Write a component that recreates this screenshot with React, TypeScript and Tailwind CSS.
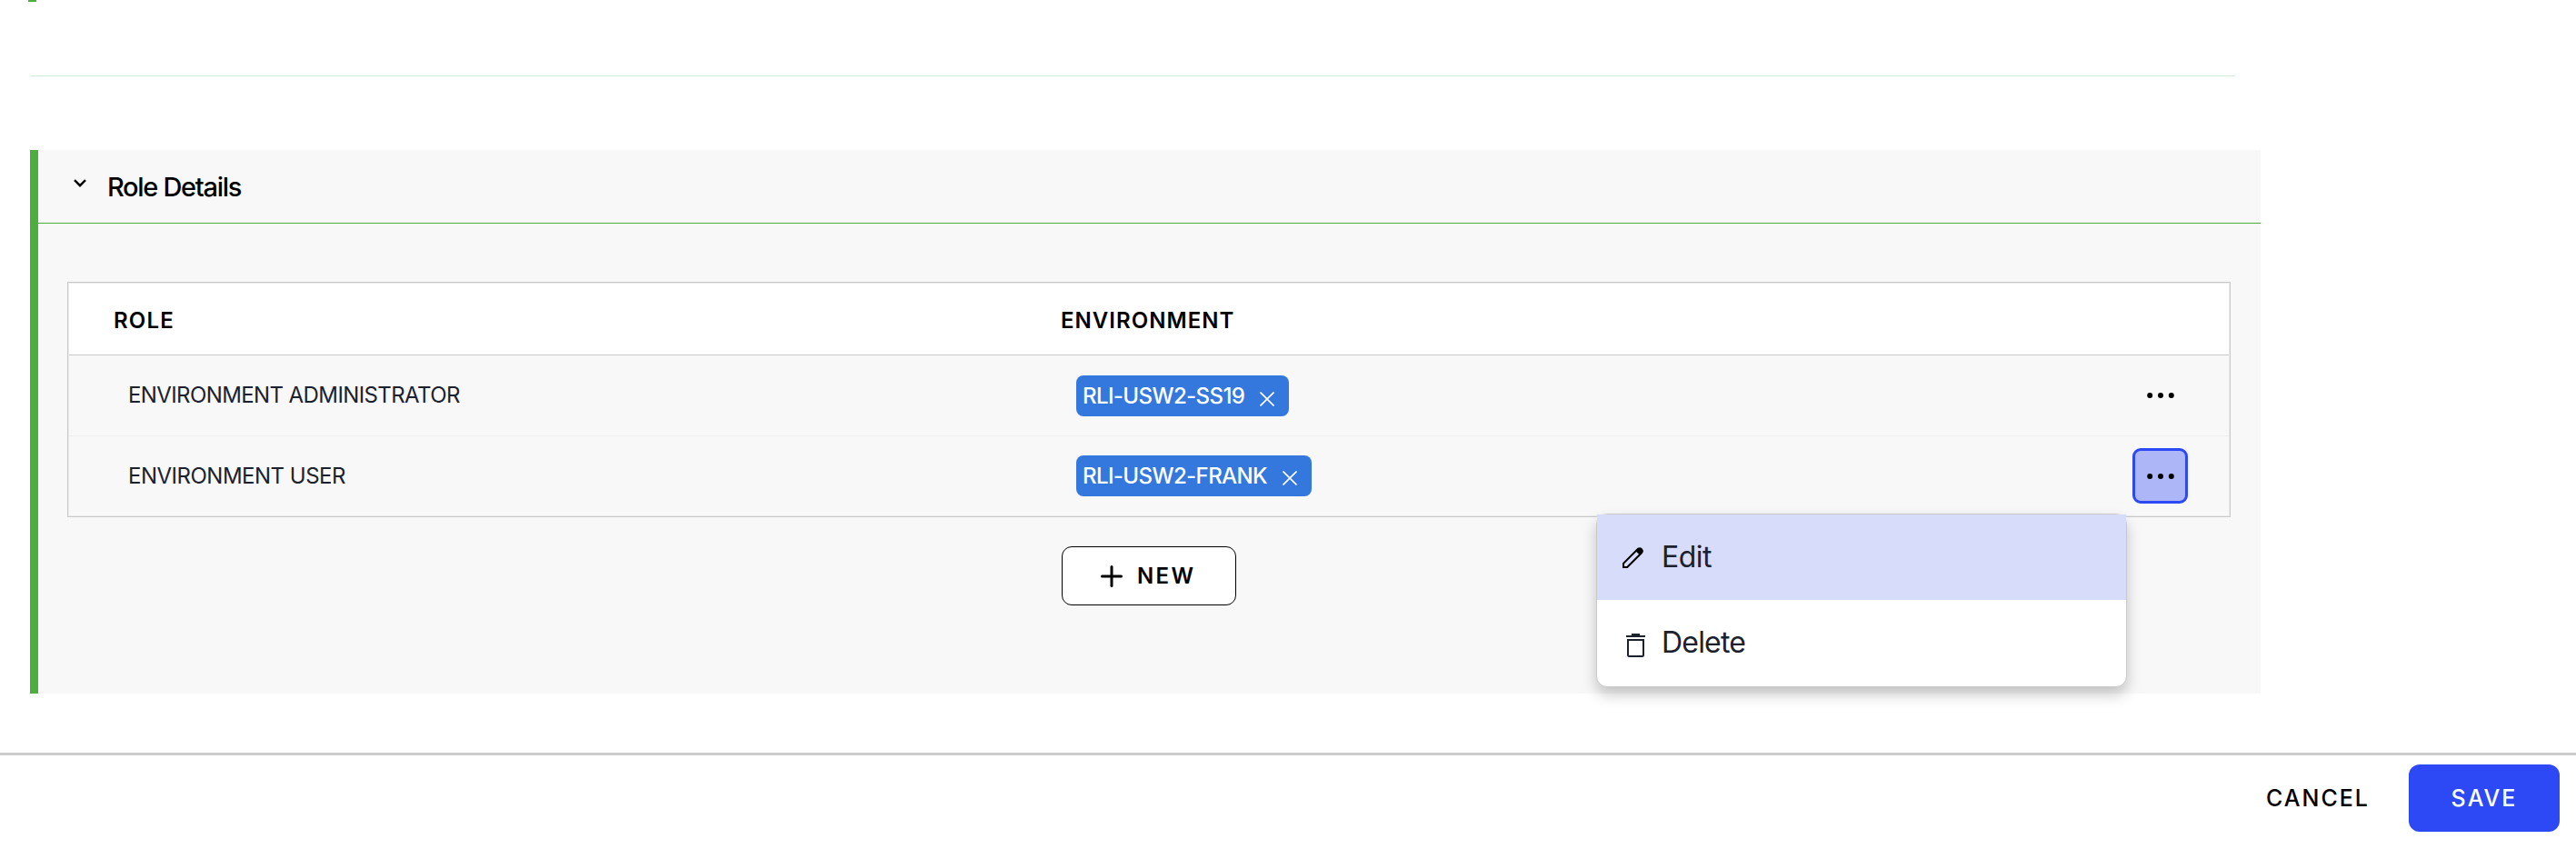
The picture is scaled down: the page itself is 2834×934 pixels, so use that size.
const CLOSE = (
  <svg className="size-4" viewBox="0 0 16 16" fill="none" stroke="currentColor" strokeWidth="1.6">
    <path d="M0.5 0.5L15.5 15.5M15.5 0.5L0.5 15.5" />
  </svg>
);

function Tag({ label, className, nudge }: { label: string; className: string; nudge: string }) {
  return (
    <div className={`flex h-[45px] items-center justify-between rounded-[8px] bg-[#3478dd] pl-[7px] pr-[16px] text-white ${className}`}>
      <span className="whitespace-nowrap pt-px text-[24px] font-medium leading-[44px] tracking-[-0.6px]">{label}</span>
      <span className={nudge}>{CLOSE}</span>
    </div>
  );
}

function Dots({ active }: { active?: boolean }) {
  return (
    <button
      className={`flex h-[61px] w-[61px] items-center justify-center rounded-[9px] border-[3px] ${
        active ? "border-[#2c49f5] bg-[#adb7f8]" : "border-transparent"
      }`}
    >
      <svg className="h-[6px] w-[30px]" viewBox="0 0 30 6" fill="#000">
        <circle cx="3.2" cy="3" r="3" />
        <circle cx="15" cy="3" r="3" />
        <circle cx="26.8" cy="3" r="3" />
      </svg>
    </button>
  );
}

export default function App() {
  return (
    <div className="flex h-[934px] w-[2834px] flex-col overflow-hidden bg-white font-['Inter','Liberation_Sans',sans-serif] text-black">
      <div className="ml-[31px] h-[2px] w-[9px] shrink-0 bg-[#4dae3f]" />
      <div className="ml-[33px] mt-[81px] h-px w-[2426px] shrink-0 bg-[#d5ebd8]" />

      <section className="relative ml-[33px] mt-[81px] h-[598px] w-[2454px] shrink-0 border-l-[9px] border-[#4dae3f] bg-[#f8f8f8]">
        <header className="flex h-[81px] items-center border-b border-[#4dae3f] pl-[39px]">
          <svg className="mb-[8px] h-[9px] w-[14px]" viewBox="0 0 14 9" fill="none" stroke="#000" strokeWidth="2.4">
            <path d="M1 1.2L7 7.2L13 1.2" />
          </svg>
          <h2 className="ml-[23px] pt-[2px] text-[29px] font-medium leading-[40px] tracking-[-1.3px]">Role Details</h2>
        </header>

        <div className="ml-[32px] mt-[64px] h-[259px] w-[2380px] border border-[#c9c9c9]">
          <div className="h-[257px] border border-[#ebebeb]">
            <div className="flex h-[79px] items-center border-b border-[#c9c9c9] bg-white pt-[4px] text-[24px] font-semibold">
              <div className="w-[1091px] pl-[49px] tracking-[1.2px]">ROLE</div>
              <div className="tracking-[1.05px]">ENVIRONMENT</div>
            </div>
            <div className="flex h-[89px] items-center border-b border-[#eeeff0]">
              <div className="w-[1108px] pl-[65px] text-[24px] tracking-[-0.6px] text-[#1c212e]">ENVIRONMENT ADMINISTRATOR</div>
              <Tag label="RLI-USW2-SS19" className="w-[234px]" nudge="pt-[7px]" />
              <div className="ml-auto pr-[45px]"><Dots /></div>
            </div>
            <div className="flex h-[87px] items-center">
              <div className="w-[1108px] pl-[65px] pt-px text-[24px] tracking-[-0.5px] text-[#1c212e]">ENVIRONMENT USER</div>
              <Tag label="RLI-USW2-FRANK" className="w-[259px]" nudge="pt-[5px]" />
              <div className="ml-auto pr-[45px]"><Dots active /></div>
            </div>
          </div>
        </div>

        <button className="ml-[1126px] mt-[32px] flex h-[65px] w-[192px] items-center rounded-[11px] border border-black bg-white pl-[42px] text-[24px] font-semibold">
          <svg className="size-6" viewBox="0 0 24 24" stroke="#000" strokeWidth="3" strokeLinecap="round">
            <path d="M12 1.5V22.5M1.5 12H22.5" />
          </svg>
          <span className="ml-[16px] tracking-[2.4px]">NEW</span>
        </button>

        <div className="absolute left-[1714px] top-[400px] h-[191px] w-[584px] rounded-[12px] border border-[#c9c9c9] bg-white text-[32px] text-[#1c212e] shadow-[0_8px_16px_rgba(0,0,0,0.22)]">
          <div className="flex h-[94px] items-center bg-[#d6dcfa] pl-[28px]">
            <svg className="h-[23px] w-[23px]" viewBox="0 0 23 23" fill="none" stroke="#000" strokeWidth="2">
              <path d="M1 22V17.8L16.8 2Q18.8 0.3 20.9 2.1Q22.8 4.2 21 6.2L5.2 22Z" />
              <path d="M14.6 4.2L16.8 2Q18.8 0.3 20.9 2.1Q22.8 4.2 21 6.2L18.8 8.4Z" fill="#000" stroke="none" />
            </svg>
            <span className="ml-[20px] tracking-[-0.5px]">Edit</span>
          </div>
          <div className="flex h-[94px] items-center pl-[32px]">
            <svg className="mt-[5px] h-[26px] w-[21px]" viewBox="0 0 21 26" fill="none" stroke="#1c212e" strokeWidth="2">
              <path d="M0 3H21M6 1H15" />
              <path d="M2 7H19V23.5Q19 25 17.5 25H3.5Q2 25 2 23.5Z" />
            </svg>
            <span className="ml-[18px] tracking-[-0.8px]">Delete</span>
          </div>
        </div>
      </section>

      <footer className="mt-[65px] flex h-[106px] shrink-0 items-start justify-end border-t-[3px] border-[#cbcbcb] pr-[18px] pt-[10px] text-[25px] font-medium">
        <button className="h-[74px] pt-[2px] tracking-[2px]">CANCEL</button>
        <button className="ml-[43px] h-[74px] w-[166px] rounded-[12px] bg-[#2c49f5] pt-[2px] tracking-[2px] text-white">SAVE</button>
      </footer>
    </div>
  );
}
